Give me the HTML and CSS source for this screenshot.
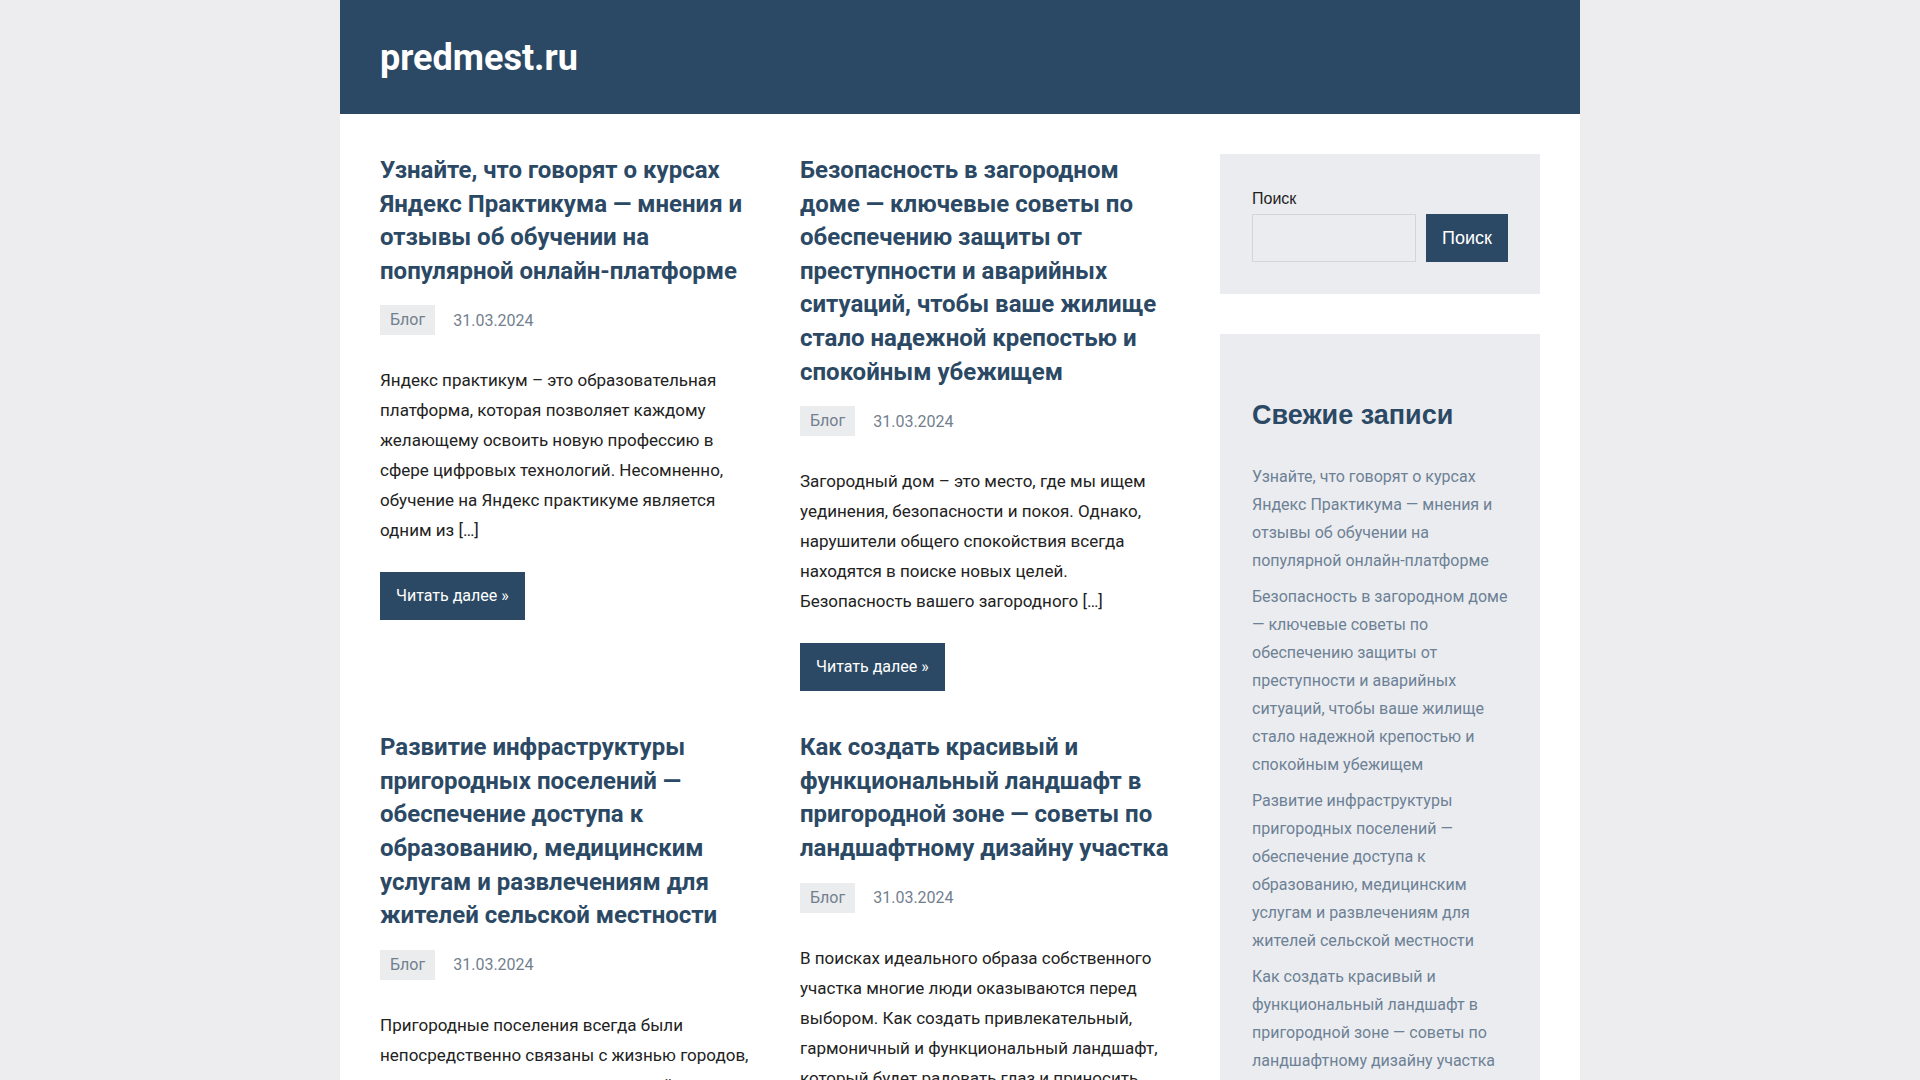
FILE: index.html
```html
<!DOCTYPE html>
<html lang="ru">
<head>
	<meta charset="UTF-8">
	<title>predmest.ru</title>
	<link rel="stylesheet" href="styles.css">
</head>
<body>
	<div class="site">
		<header class="site-header">
			<a class="site-title" href="#">predmest.ru</a>
		</header>

		<div class="site-content">
			<main class="posts">
				<article class="post">
					<h2 class="post-title"><a href="#">Узнайте, что говорят о курсах Яндекс Практикума — мнения и отзывы об обучении на популярной онлайн-платформе</a></h2>
					<div class="post-meta">
						<span class="post-cat">Блог</span>
						<span class="post-date">31.03.2024</span>
					</div>
					<p class="post-excerpt">Яндекс практикум – это образовательная платформа, которая позволяет каждому желающему освоить новую профессию в сфере цифровых технологий. Несомненно, обучение на Яндекс практикуме является одним из […]</p>
					<a class="more-link" href="#">Читать далее »</a>
				</article>

				<article class="post">
					<h2 class="post-title"><a href="#">Безопасность в загородном доме — ключевые советы по обеспечению защиты от преступности и аварийных ситуаций, чтобы ваше жилище стало надежной крепостью и спокойным убежищем</a></h2>
					<div class="post-meta">
						<span class="post-cat">Блог</span>
						<span class="post-date">31.03.2024</span>
					</div>
					<p class="post-excerpt">Загородный дом – это место, где мы ищем уединения, безопасности и покоя. Однако, нарушители общего спокойствия всегда находятся в поиске новых целей. Безопасность вашего загородного […]</p>
					<a class="more-link" href="#">Читать далее »</a>
				</article>

				<article class="post">
					<h2 class="post-title"><a href="#">Развитие инфраструктуры пригородных поселений — обеспечение доступа к образованию, медицинским услугам и развлечениям для жителей сельской местности</a></h2>
					<div class="post-meta">
						<span class="post-cat">Блог</span>
						<span class="post-date">31.03.2024</span>
					</div>
					<p class="post-excerpt">Пригородные поселения всегда были непосредственно связаны с жизнью городов, являясь их продолжением и важной частью общей инфраструктуры региона. […]</p>
					<a class="more-link" href="#">Читать далее »</a>
				</article>

				<article class="post">
					<h2 class="post-title"><a href="#">Как создать красивый и функциональный ландшафт в пригородной зоне — советы по ландшафтному дизайну участка</a></h2>
					<div class="post-meta">
						<span class="post-cat">Блог</span>
						<span class="post-date">31.03.2024</span>
					</div>
					<p class="post-excerpt">В поисках идеального образа собственного участка многие люди оказываются перед выбором. Как создать привлекательный, гармоничный и функциональный ландшафт, который будет радовать глаз и приносить удовольствие […]</p>
					<a class="more-link" href="#">Читать далее »</a>
				</article>
			</main>

			<aside class="sidebar">
				<section class="widget widget-search">
					<form class="search-form">
						<label class="search-label" for="s">Поиск</label>
						<div class="search-row">
							<input class="search-input" id="s" type="search">
							<button class="search-button" type="button">Поиск</button>
						</div>
					</form>
				</section>

				<section class="widget widget-recent">
					<h3 class="widget-title">Свежие записи</h3>
					<ul class="recent-list">
						<li><a href="#">Узнайте, что говорят о курсах Яндекс Практикума — мнения и отзывы об обучении на популярной онлайн-платформе</a></li>
						<li><a href="#">Безопасность в загородном доме — ключевые советы по обеспечению защиты от преступности и аварийных ситуаций, чтобы ваше жилище стало надежной крепостью и спокойным убежищем</a></li>
						<li><a href="#">Развитие инфраструктуры пригородных поселений — обеспечение доступа к образованию, медицинским услугам и развлечениям для жителей сельской местности</a></li>
						<li><a href="#">Как создать красивый и функциональный ландшафт в пригородной зоне — советы по ландшафтному дизайну участка</a></li>
						<li><a href="#">Пригородная жизнь — плюсы и минусы переезда за город</a></li>
					</ul>
				</section>
			</aside>
		</div>
	</div>
</body>
</html>
```

FILE: styles.css
```css
* {
	box-sizing: border-box;
}
html, body {
	margin: 0;
	padding: 0;
}
body {
	background: #ededf0;
	font-family: Roboto, "Noto Sans", sans-serif;
	color: #222;
}
a {
	text-decoration: none;
}

.site {
	width: 1240px;
	margin: 0 auto;
	background: #fff;
	min-height: 100vh;
}

/* шапка */
.site-header {
	background: #2b4964;
	height: 114px;
	padding: 0 40px;
	display: flex;
	align-items: center;
}
.site-title {
	color: #fff;
	font-size: 36px;
	font-weight: 700;
	line-height: 1;
	margin-top: 2px;
}

.site-content {
	display: flex;
	gap: 40px;
	padding: 40px;
}

/* записи в две колонки */
.posts {
	flex: 1;
	display: grid;
	grid-template-columns: 1fr 1fr;
	column-gap: 40px;
	row-gap: 40px;
	align-items: start;
}
.post-title {
	margin: 0;
	font-size: 24px;
	line-height: 1.4;
	font-weight: 700;
}
.post-title a {
	color: #2b4964;
}
.post-meta {
	display: flex;
	align-items: center;
	gap: 18px;
	margin-top: 17px;
	font-size: 16px;
	color: #72808e;
}
.post-cat {
	background: #ebecee;
	padding: 0 10px;
	line-height: 30px;
}
.post-excerpt {
	margin: 30px 0 0;
	font-size: 17px;
	line-height: 30px;
	color: #222;
}
.more-link {
	display: inline-block;
	margin-top: 27px;
	background: #2b4964;
	color: #fff;
	font-size: 16px;
	line-height: 48px;
	padding: 0 16px;
}

/* боковая колонка */
.sidebar {
	width: 320px;
	flex-shrink: 0;
	display: flex;
	flex-direction: column;
	gap: 40px;
}
.widget {
	background: #ebecef;
	padding: 32px;
}
.widget-search {
	font-family: "Liberation Sans", Arial, sans-serif;
}
.search-label {
	display: block;
	font-size: 16px;
	line-height: 24px;
	color: #1e1e1e;
	margin: 1px 0 3px;
}
.search-row {
	display: flex;
	gap: 10px;
}
.search-input {
	flex: 1;
	min-width: 0;
	height: 48px;
	border: 1px solid #d4d5d8;
	background: #ebecef;
	margin: 0;
}
.search-button {
	height: 48px;
	border: 0;
	margin: 0;
	background: #2b4964;
	color: #fff;
	font-family: "Liberation Sans", Arial, sans-serif;
	font-size: 18px;
	padding: 0 16px;
}

.widget-recent {
	padding-top: 64px;
}
.widget-title {
	margin: 0 0 30px;
	font-family: "Liberation Sans", Arial, sans-serif;
	font-size: 27px;
	line-height: 1.3;
	font-weight: 700;
	color: #2b4964;
}
.recent-list {
	list-style: none;
	margin: 0;
	padding: 0;
}
.recent-list li {
	font-size: 16px;
	line-height: 28px;
	margin-bottom: 8px;
}
.recent-list a {
	color: #6d8196;
}
```
